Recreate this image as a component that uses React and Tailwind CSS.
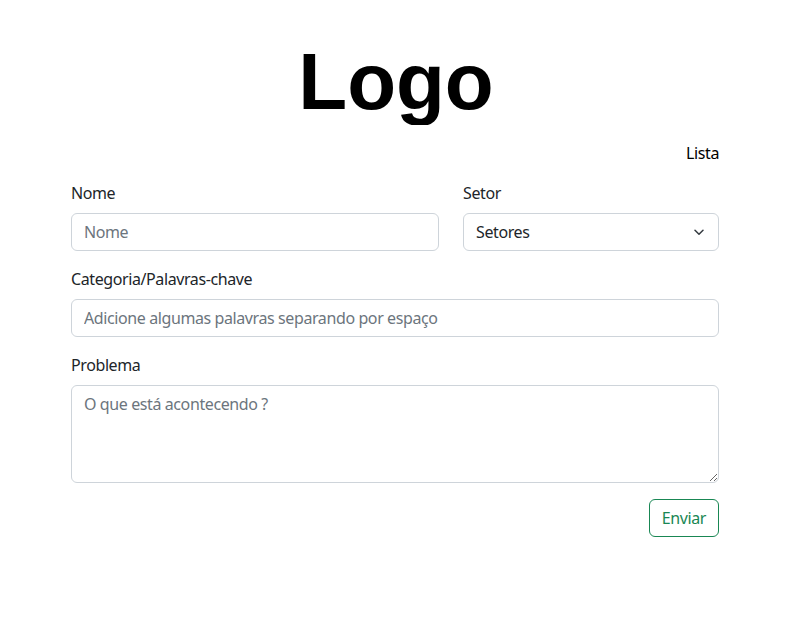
import React, { useState } from "react";

export default function App() {
  const [nome, setNome] = useState("");
  const [setor, setSetor] = useState("");
  const [palavras, setPalavras] = useState("");
  const [problema, setProblema] = useState("");

  const campo =
    "w-full h-[38px] border border-[#ced4da] rounded-[6px] px-3 text-base tracking-[-0.4px] text-[#212529] placeholder:text-[#6c757d] focus:outline-none bg-white";

  return (
    <div className="bg-white text-[#212529] tracking-[-0.4px]" style={{ fontFamily: '"Noto Sans", sans-serif' }}>
      {/* Logo */}
      <div className="pt-[42px]">
        <div className="h-[83px] overflow-hidden flex justify-center">
          <span
            className="text-[80px] leading-[80px] font-bold text-black tracking-normal"
            style={{ fontFamily: '"Liberation Sans", Arial, sans-serif' }}
          >
            Logo
          </span>
        </div>
      </div>

      <div className="w-[648px] ml-[71px] pb-[97px]">
        <div className="flex justify-end mt-4">
          <a href="#" className="text-base leading-6 text-black">Lista</a>
        </div>

        <form className="mt-4" onSubmit={(e) => e.preventDefault()}>
          <div className="grid grid-cols-[368px_256px] gap-x-6">
            <div>
              <label className="block text-base leading-6 mb-2">Nome</label>
              <input
                type="text"
                placeholder="Nome"
                value={nome}
                onChange={(e) => setNome(e.target.value)}
                className={campo}
              />
            </div>
            <div>
              <label className="block text-base leading-6 mb-2">Setor</label>
              <div className="relative">
                <select
                  value={setor}
                  onChange={(e) => setSetor(e.target.value)}
                  className={campo + " appearance-none pr-9"}
                >
                  <option value="">Setores</option>
                  <option value="ti">TI</option>
                  <option value="rh">RH</option>
                </select>
                <svg
                  className="absolute right-[15px] top-[16px] pointer-events-none"
                  width="10"
                  height="7"
                  viewBox="0 0 10 7"
                  fill="none"
                  stroke="#343a40"
                  strokeWidth="1.5"
                  strokeLinecap="round"
                  strokeLinejoin="round"
                >
                  <path d="M1 1.2 5 5.2 9 1.2" />
                </svg>
              </div>
            </div>
          </div>

          <div className="mt-4">
            <label className="block text-base leading-6 mb-2">Categoria/Palavras-chave</label>
            <input
              type="text"
              placeholder="Adicione algumas palavras separando por espaço"
              value={palavras}
              onChange={(e) => setPalavras(e.target.value)}
              className={campo}
            />
          </div>

          <div className="mt-4">
            <label className="block text-base leading-6 mb-2">Problema</label>
            <textarea
              placeholder="O que está acontecendo ?"
              value={problema}
              onChange={(e) => setProblema(e.target.value)}
              className="block w-full h-[98px] border border-[#ced4da] rounded-[6px] px-3 py-[6px] text-base leading-6 tracking-[-0.4px] text-[#212529] placeholder:text-[#6c757d] focus:outline-none"
            />
          </div>

          <div className="flex justify-end mt-4">
            <button
              type="submit"
              className="h-[38px] px-3 border border-[#198754] rounded-[6px] text-[#198754] text-base hover:bg-[#198754] hover:text-white"
            >
              Enviar
            </button>
          </div>
        </form>
      </div>
    </div>
  );
}
